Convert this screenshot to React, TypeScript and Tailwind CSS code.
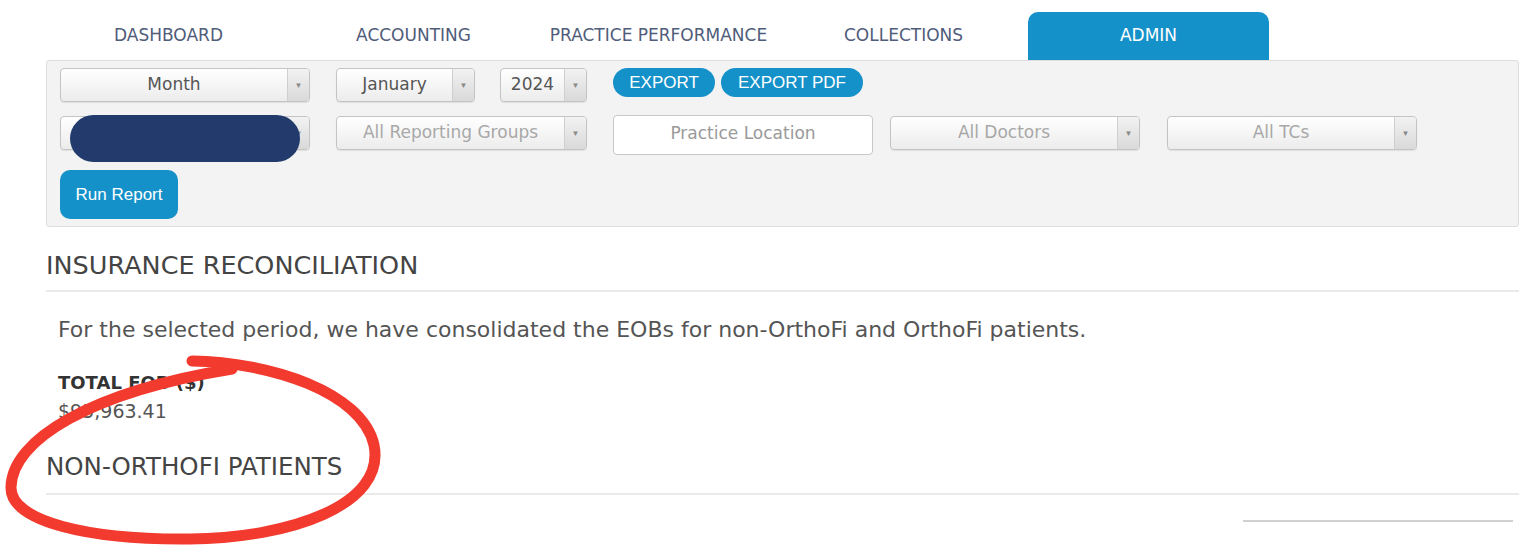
import React from "react";

const FONT = { fontFamily: '"DejaVu Sans", "Liberation Sans", sans-serif' };
const ARIAL = { fontFamily: '"Liberation Sans", Arial, sans-serif' };

function Select({
  label,
  width,
  muted = false,
  className = "",
}: {
  label: string;
  width: string;
  muted?: boolean;
  className?: string;
}) {
  return (
    <div
      className={`flex h-[34px] ${width} ${className} overflow-hidden rounded-[4px] border border-[#c4c4c4] bg-gradient-to-b from-white to-[#ececec] shadow-[0_1px_1px_rgba(0,0,0,0.08)]`}
    >
      <div
        className={`flex flex-1 items-center justify-center text-[17px] ${
          muted ? "text-[#a8a8a8]" : "text-[#555]"
        }`}
        style={FONT}
      >
        {label}
      </div>
      <div className="flex w-[22px] items-center justify-center border-l border-[#cfcfcf] bg-gradient-to-b from-[#f2f2f2] to-[#d9d9d9]">
        <span className="text-[8px] leading-none text-[#8a8a8a]">▼</span>
      </div>
    </div>
  );
}

const tabs = ["DASHBOARD", "ACCOUNTING", "PRACTICE PERFORMANCE", "COLLECTIONS", "ADMIN"];

export default function App() {
  return (
    <div className="relative h-[546px] w-[1525px] overflow-hidden bg-white">
      <div className="pl-[46px] pr-[6px] pt-[12px]">
        {/* top navigation tabs */}
        <div className="flex h-[48px]">
          {tabs.map((t) => {
            const active = t === "ADMIN";
            return (
              <div key={t} className="w-[245px] px-[2px]">
                <div
                  className={`flex h-full items-center justify-center rounded-t-[10px] text-[17px] ${
                    active ? "bg-[#1591c9] text-white" : "text-[#4f5c7a]"
                  }`}
                  style={FONT}
                >
                  {t}
                </div>
              </div>
            );
          })}
        </div>

        {/* filter panel */}
        <div className="rounded-[3px] border border-[#dedede] bg-[#f3f3f3] pb-[7px] pl-[13px] pt-[7px]">
          <div className="flex items-start">
            <Select label="Month" width="w-[250px]" />
            <Select label="January" width="w-[139px]" className="ml-[26px]" />
            <Select label="2024" width="w-[87px]" className="ml-[25px]" />
            <button
              className="ml-[26px] h-[29px] w-[102px] rounded-full bg-[#1591c9] text-[17px] text-white"
              style={ARIAL}
            >
              EXPORT
            </button>
            <button
              className="ml-[6px] h-[29px] w-[142px] rounded-full bg-[#1591c9] text-[17px] text-white"
              style={ARIAL}
            >
              EXPORT PDF
            </button>
          </div>

          <div className="mt-[14px] flex items-start">
            <div className="relative">
              <Select label="" width="w-[250px]" />
              <div className="absolute left-[10px] top-[-1px] h-[47px] w-[230px] rounded-full bg-[#223b6c]" />
            </div>
            <Select
              label="All Reporting Groups"
              width="w-[251px]"
              muted
              className="ml-[26px]"
            />
            <div
              className="ml-[26px] mt-[-1px] flex h-[40px] w-[260px] justify-center rounded-[4px] border border-[#c8c8c8] bg-white pt-[5px] text-[17px] text-[#999]"
              style={FONT}
            >
              Practice Location
            </div>
            <Select label="All Doctors" width="w-[250px]" muted className="ml-[17px]" />
            <Select label="All TCs" width="w-[250px]" muted className="ml-[27px]" />
          </div>

          <button
            className="mt-[15px] h-[49px] w-[118px] rounded-[10px] bg-[#1591c9] text-[17px] text-white"
            style={ARIAL}
          >
            Run Report
          </button>
        </div>

        {/* report body */}
        <div style={FONT}>
          <h2 className="mt-[23px] text-[25.5px] leading-[30px] text-[#444]">
            INSURANCE RECONCILIATION
          </h2>
          <div className="mt-[10px] h-[2px] bg-[#eaeaea]" />
          <p className="mt-[25px] pl-[12px] text-[22px] leading-[26px] text-[#555]">
            For the selected period, we have consolidated the EOBs for non-OrthoFi and OrthoFi
            patients.
          </p>
          <div className="mt-[29px] pl-[12px] text-[18px] font-bold leading-[22px] text-[#333]">
            TOTAL EOB ($)
          </div>
          <div className="mt-[5px] pl-[12px] text-[19px] leading-[24px] text-[#555]">
            $95,963.41
          </div>
          <h2 className="mt-[29px] text-[24.5px] leading-[30px] text-[#444]">
            NON-ORTHOFI PATIENTS
          </h2>
          <div className="mt-[11px] h-[2px] bg-[#eaeaea]" />
          <div className="flex justify-end pr-[6px] pt-[25px]">
            <div className="h-[2px] w-[270px] bg-[#d0d0d0]" />
          </div>
        </div>
      </div>

      {/* hand-drawn red annotation loop */}
      <svg
        className="pointer-events-none absolute left-0 top-0"
        width="1525"
        height="546"
        viewBox="0 0 1525 546"
      >
        <path
          d="M192 361 C 270 362, 362 392, 374 445 C 386 505, 290 538, 190 539 C 90 540, 10 522, 11 487 C 12 440, 90 392, 232 369"
          fill="none"
          stroke="#f33a2e"
          strokeWidth="11"
          strokeLinecap="round"
        />
      </svg>
    </div>
  );
}
